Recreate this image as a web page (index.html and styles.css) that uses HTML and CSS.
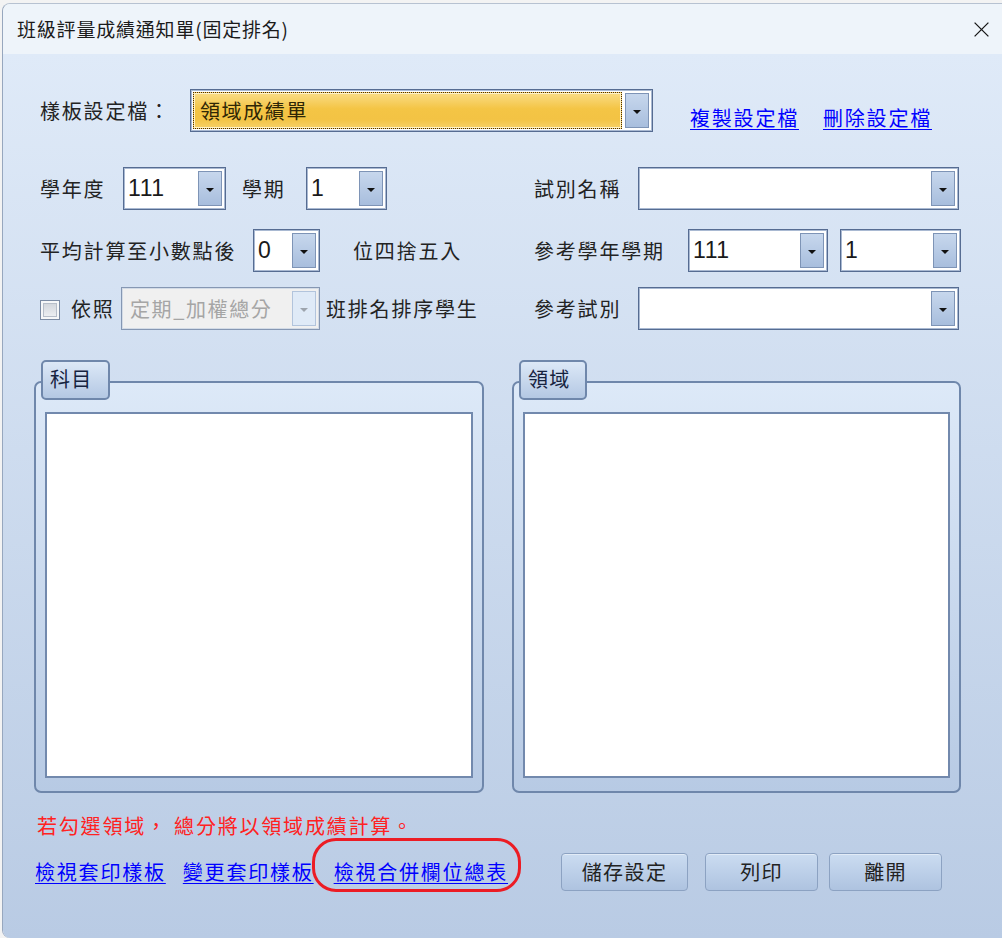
FILE: index.html
```html
<!DOCTYPE html>
<html lang="zh-Hant">
<head>
<meta charset="utf-8">
<title>班級評量成績通知單(固定排名)</title>
<link rel="stylesheet" href="styles.css">
</head>
<body>
<div class="window">
  <div class="titlebar">
    <span class="title">班級評量成績通知單(固定排名)</span>
    <svg class="close" width="15" height="15" viewBox="0 0 15 15"><path d="M0.6 0.6L14.4 14.4M14.4 0.6L0.6 14.4" stroke="#1a1a1a" stroke-width="1.3" fill="none"/></svg>
  </div>
  <div class="content">
    <div class="row">
      <span class="lbl w-tpl">樣板設定檔：</span>
      <div class="combo w463">
        <div class="field focus">領域成績單</div>
        <span class="dd"></span>
      </div>
      <a class="link top-link first">複製設定檔</a>
      <a class="link top-link second">刪除設定檔</a>
    </div>

    <div class="row r2">
      <div class="left">
        <span class="lbl w83">學年度</span>
        <div class="combo w103"><div class="field">111</div><span class="dd"></span></div>
        <span class="lbl w64 ml16">學期</span>
        <div class="combo w81"><div class="field">1</div><span class="dd"></span></div>
      </div>
      <div class="right">
        <span class="lbl w104">試別名稱</span>
        <div class="combo w321"><div class="field"></div><span class="dd"></span></div>
      </div>
    </div>

    <div class="row r3">
      <div class="left">
        <span class="lbl w213">平均計算至小數點後</span>
        <div class="combo w67"><div class="field">0</div><span class="dd"></span></div>
        <span class="lbl ml33">位四捨五入</span>
      </div>
      <div class="right">
        <span class="lbl w154">參考學年學期</span>
        <div class="combo w140"><div class="field">111</div><span class="dd"></span></div>
        <div class="combo w121 ml12"><div class="field">1</div><span class="dd"></span></div>
      </div>
    </div>

    <div class="row r4">
      <div class="left">
        <span class="check"><span class="check-in"></span></span>
        <span class="lbl w50 ml11">依照</span>
        <div class="combo w199 disabled"><div class="field">定期_加權總分</div><span class="dd"></span></div>
        <span class="lbl ml6">班排名排序學生</span>
      </div>
      <div class="right">
        <span class="lbl w104">參考試別</span>
        <div class="combo w321"><div class="field"></div><span class="dd"></span></div>
      </div>
    </div>

    <div class="groups">
      <div class="group g-left">
        <span class="tab">科目</span>
        <div class="frame"><div class="list"></div></div>
      </div>
      <div class="group g-right">
        <span class="tab">領域</span>
        <div class="frame"><div class="list"></div></div>
      </div>
    </div>

    <p class="note">若勾選領域， 總分將以領域成績計算。</p>

    <div class="bottom">
      <a class="link b1">檢視套印樣板</a>
      <a class="link b2">變更套印樣板</a>
      <a class="link b3">檢視合併欄位總表</a>
      <button class="push w127 mlb">儲存設定</button>
      <button class="push w113 ml17">列印</button>
      <button class="push w113 ml11">離開</button>
      <span class="mark"></span>
    </div>
  </div>
</div>
</body>
</html>
```

FILE: styles.css
```css
* { box-sizing: border-box; }
html, body { margin: 0; padding: 0; }
body {
  width: 1002px;
  height: 938px;
  overflow: hidden;
  background: #f3f3f3;
  font-family: "Noto Sans CJK TC", "Noto Sans CJK SC", sans-serif;
}

.window {
  margin: 3px 0 0 2px;
  height: 935px;
  border-top: 1px solid #b7c2d1;
  border-left: 1px solid #97a7be;
  border-radius: 8px 0 0 8px;
  overflow: hidden;
  display: flex;
  flex-direction: column;
}

.titlebar {
  flex: none;
  height: 50px;
  background: #eef4fa;
  display: flex;
  align-items: center;
  justify-content: space-between;
  padding: 0 13px 0 14px;
}
.title {
  font-size: 19px;
  letter-spacing: 0.8px;
  color: #1b1b1b;
  line-height: 24px;
}
.close { display: block; }

.content {
  flex: 1;
  background: linear-gradient(#dfeaf8, #b9cbe4);
  padding: 35px 0 0 31px;
}

.row {
  display: flex;
  align-items: center;
  height: 43px;
  padding-left: 6px;
}
.r2 { margin-top: 35px; }
.r3 { margin-top: 19px; }
.r4 { margin-top: 15px; }
.left { width: 494px; display: flex; align-items: center; }
.right { display: flex; align-items: center; }

.lbl {
  font-size: 20px;
  letter-spacing: 1.8px;
  line-height: 24px;
  color: #232323;
  white-space: nowrap;
}
.w-tpl { width: 150px; }
.w83 { width: 83px; }
.w64 { width: 64px; }
.w104 { width: 104px; }
.w213 { width: 213px; }
.w154 { width: 154px; }
.w50 { width: 50px; }
.ml16 { margin-left: 16px; }
.ml33 { margin-left: 33px; }
.ml12 { margin-left: 12px; }
.ml11 { margin-left: 11px; }
.ml6 { margin-left: 6px; }
.ml17 { margin-left: 17px; }

/* combo boxes */
.combo {
  display: flex;
  height: 43px;
  border: 1px solid #566c92;
  box-shadow: inset 0 0 0 1px #a9b9d2;
  background: #fff;
  padding: 2px;
}
.w463 { width: 463px; }
.w103 { width: 103px; }
.w81 { width: 81px; }
.w321 { width: 321px; }
.w67 { width: 67px; }
.w140 { width: 140px; }
.w121 { width: 121px; }
.w199 { width: 199px; }

.field {
  flex: 1;
  min-width: 0;
  display: flex;
  align-items: center;
  padding-left: 2px;
  font-family: "Liberation Sans", "Noto Sans CJK TC", sans-serif;
  font-size: 23px;
  letter-spacing: 0.6px;
  color: #1a1a1a;
  white-space: nowrap;
  overflow: hidden;
}
.field.focus {
  margin-right: 3px;
  border: 1px dotted #4a2c08;
  box-shadow: inset 0 0 0 1px #fff3c8;
  background: linear-gradient(#f9dc86 0%, #f4c545 45%, #f3c344 75%, #f6d067 100%);
  padding-left: 6px;
  font-family: "Noto Sans CJK TC", sans-serif;
  font-size: 20px;
  letter-spacing: 1.6px;
  color: #2e2606;
}
.dd {
  flex: none;
  width: 24px;
  margin: 1px 1px 1px 0;
  border: 1px solid #7e94b6;
  background: linear-gradient(#c7d7ed, #a8bedd);
  display: flex;
  align-items: center;
  justify-content: center;
}
.dd::after {
  content: "";
  margin-top: 2px;
  border-left: 4px solid transparent;
  border-right: 4px solid transparent;
  border-top: 4px solid #111;
}
.combo.disabled {
  background: #f0f0f0;
  border-color: #8597b3;
  box-shadow: inset 0 0 0 1px #d3dbe6;
}
.combo.disabled .field {
  font-family: "Noto Sans CJK TC", sans-serif;
  font-size: 20px;
  letter-spacing: 1.6px;
  color: #a5a5a5;
  padding-left: 6px;
}
.combo.disabled .dd {
  background: #dfeaf7;
  border-color: #b2c4dc;
}
.combo.disabled .dd::after { border-top-color: #9da4ad; }

/* checkbox */
.check {
  width: 20px;
  height: 20px;
  border: 1px solid #7b8ba3;
  background: #f6f7f8;
  padding: 2px;
  margin-top: 2px;
}
.check-in {
  display: block;
  width: 100%;
  height: 100%;
  border: 1px solid #b7bec9;
  background: linear-gradient(#d3d7dd, #eceef1);
}

/* links */
.link {
  font-size: 20px;
  letter-spacing: 1.8px;
  line-height: 24px;
  color: #0000ff;
  text-decoration: underline;
  text-underline-offset: 3px;
  text-decoration-thickness: 1px;
  white-space: nowrap;
  cursor: pointer;
}
.top-link { align-self: flex-end; margin-bottom: 2px; }
.top-link.first { margin-left: 37px; }
.top-link.second { margin-left: 24px; }

/* group boxes */
.groups {
  display: flex;
  gap: 28px;
  margin-top: 30px;
}
.group {
  position: relative;
  padding-top: 21px;
}
.g-left { width: 450px; }
.g-right { width: 449px; }
.frame {
  height: 412px;
  border: 2px solid #6f87ab;
  border-radius: 7px;
  background: linear-gradient(#dde9f8, #b7cae4);
  padding: 29px 9px 13px 9px;
}
.list {
  height: 100%;
  background: #fff;
  border: 2px solid #7289ad;
}
.tab {
  position: absolute;
  top: 0;
  left: 7px;
  width: 69px;
  height: 40px;
  border: 2px solid #6f87ab;
  border-radius: 5px;
  background: linear-gradient(#dce8f7, #b4c8e3);
  padding: 5px 0 0 7px;
  font-size: 20px;
  letter-spacing: 1.2px;
  line-height: 24px;
  color: #16233f;
}
.g-right .tab { width: 68px; }

.note {
  margin: 21px 0 0 3px;
  font-size: 20px;
  letter-spacing: 1.8px;
  line-height: 24px;
  color: #ff2222;
}

.bottom {
  position: relative;
  display: flex;
  align-items: center;
  height: 39px;
  margin-top: 14px;
}
.b1 { margin-left: 1px; }
.b2 { margin-left: 17px; }
.b3 { margin-left: 20px; }
.mlb { margin-left: 53px; }

.push {
  height: 38px;
  border: 1px solid #8ca2c2;
  border-radius: 4px;
  background: linear-gradient(#cbdcf1, #aec3e0);
  box-shadow: inset 0 1px 0 rgba(255,255,255,0.45);
  font-family: "Noto Sans CJK TC", sans-serif;
  font-size: 20px;
  letter-spacing: 1.4px;
  color: #222;
  padding: 0;
}
.w127 { width: 127px; }
.w113 { width: 113px; }

.mark {
  position: absolute;
  left: 278px;
  top: -14px;
  width: 209px;
  height: 54px;
  border: 3.5px solid #ec1c24;
  border-radius: 24px;
  pointer-events: none;
}
```
